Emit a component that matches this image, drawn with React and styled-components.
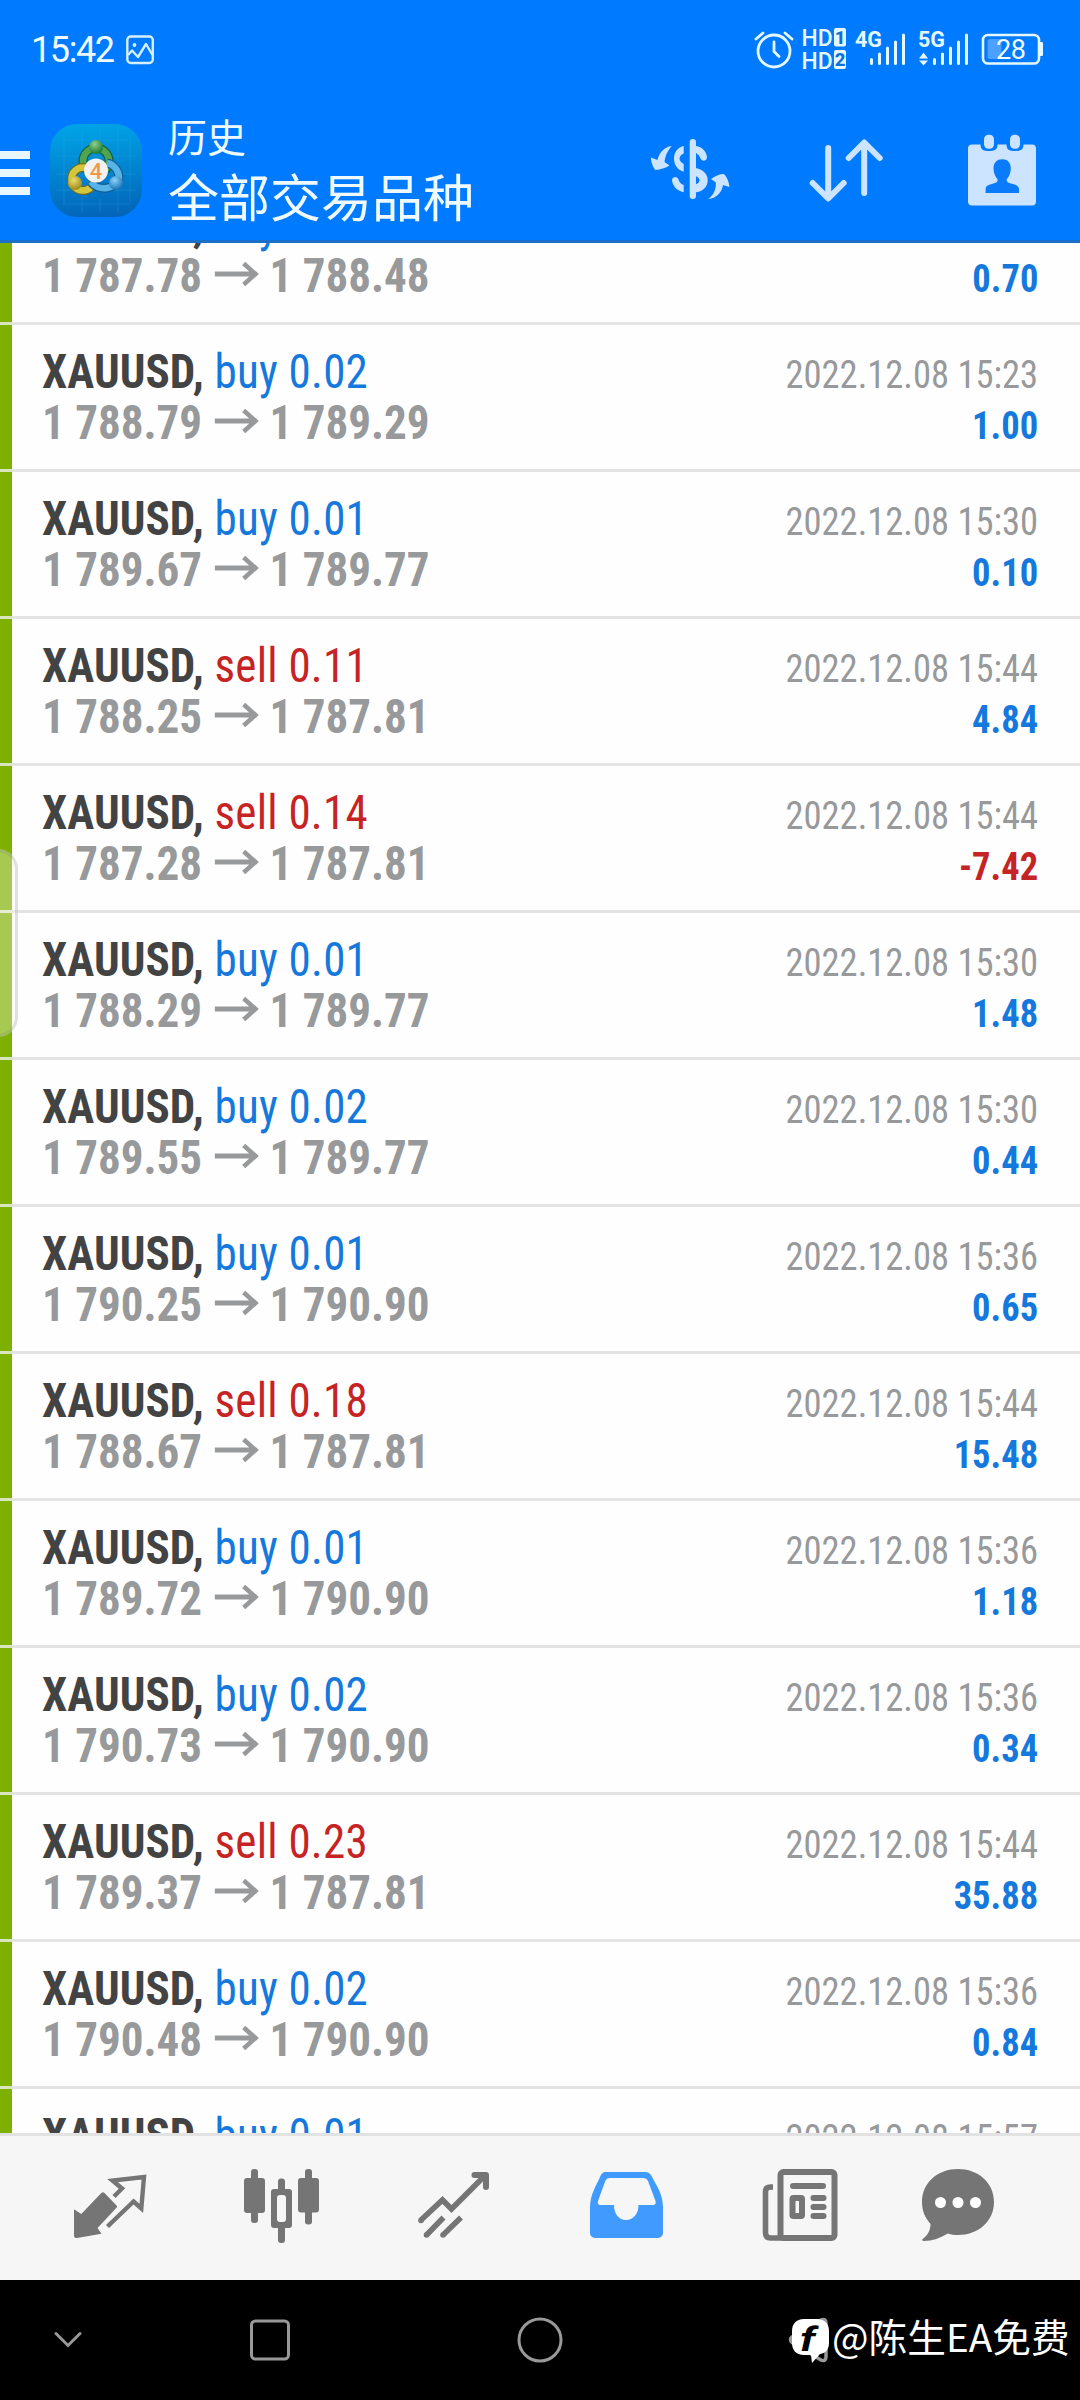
import React from 'react';
import styled, { createGlobalStyle } from 'styled-components';

const GlobalStyle = createGlobalStyle`
  * {
    box-sizing: border-box;
  }
  body {
    margin: 0;
    background: #000;
  }
  svg {
    display: block;
    flex: none;
  }
`;

const SIDE_COLORS = { buy: '#1478dd', sell: '#c62424' };

// STYLED COMPONENTS
const Screen = styled.div`
  position: relative;
  display: flex;
  flex-direction: column;
  width: 1080px;
  height: 2400px;
  overflow: hidden;
  background: #fefefe;
  font-family: Roboto, 'Noto Sans CJK SC', sans-serif;
`;

const Header = styled.header`
  display: flex;
  flex-direction: column;
  height: 243px;
  background: #007aff;
  border-bottom: 3px solid #1a70c9;
  color: #eefaff;
`;

const StatusBar = styled.div`
  display: flex;
  justify-content: space-between;
  height: 100px;
  padding: 20px 30px 0 31px;
`;

const StatusGroup = styled.div`
  display: flex;
  align-items: center;
  height: 60px;
`;

const Clock = styled.span`
  width: 95px;
  font-size: 36px;
  line-height: 62px;
  letter-spacing: -1.4px;
`;

const Toolbar = styled.div`
  display: flex;
  height: 140px;
`;

const MenuButton = styled.button`
  display: flex;
  flex-direction: column;
  gap: 10px;
  width: 30px;
  margin: 51px 20px 0 0;
  padding: 0;
  border: 0;
  background: none;
`;

const MenuBar = styled.span`
  height: 8px;
  background: #e8f6ff;
`;

const AppLogo = styled.svg`
  margin-top: 24px;
`;

const Titles = styled.div`
  display: flex;
  flex-direction: column;
  width: 476px;
  margin: 11px 0 0 26px;
`;

const Subtitle = styled.span`
  font-size: 39px;
  line-height: 56px;
`;

const Title = styled.span`
  font-size: 51px;
  line-height: 66px;
`;

const Actions = styled.div`
  display: grid;
  grid-template-columns: 90px 90px 90px;
  column-gap: 66px;
  margin-top: 25px;
`;

const List = styled.main`
  position: relative;
  height: 1890px;
  overflow: hidden;
`;

const Deals = styled.div`
  margin-top: -65px;
`;

const Row = styled.div`
  display: flex;
  height: 147px;
`;

const Marker = styled.div`
  width: 12px;
  background: #7eb000;
  border-bottom: 3px solid #d9e6bd;
`;

const RowBody = styled.div`
  display: flex;
  flex: 1;
  justify-content: space-between;
  padding: 0 42px 0 30px;
  border-bottom: 3px solid #e4e4e4;
`;

const Column = styled.div`
  padding-top: ${props => (props.$end ? 24 : 21)}px;
  font-size: ${props => (props.$end ? 39.5 : 48)}px;
  font-stretch: 75%;
  line-height: 51px;
  text-align: ${props => (props.$end ? 'right' : 'left')};
  white-space: nowrap;
  transform: scaleX(${props => (props.$end ? 0.925 : 0.938)});
  transform-origin: ${props => (props.$end ? 'right' : 'left')} top;
`;

const Line = styled.div`
  display: flex;
  height: 51px;
`;

const DealSymbol = styled.span`
  width: 184px;
  color: #434343;
  font-weight: 700;
  letter-spacing: 0.1px;
`;

const Side = styled.span`
  color: ${props => SIDE_COLORS[props.$side]};
  letter-spacing: 0.25px;
`;

const Price = styled.span`
  color: #97999b;
  font-weight: 700;
`;

const PriceArrow = styled.svg`
  margin: 12px 12px 0 13px;
`;

const DealTime = styled.div`
  color: #97999b;
`;

const Profit = styled.div`
  color: ${props => (props.$loss ? '#c62424' : '#1478dd')};
  font-weight: 700;
`;

const EdgeHandle = styled.div`
  position: absolute;
  top: 606px;
  left: -3px;
  width: 21px;
  height: 188px;
  border: 3px solid rgba(190, 195, 190, 0.5);
  border-radius: 0 20px 20px 0;
  background: rgba(255, 255, 255, 0.32);
  background-clip: padding-box;
`;

const TabBar = styled.nav`
  display: grid;
  grid-template-columns: 172px 172px 172px 172px 176px 140px;
  justify-items: center;
  height: 147px;
  padding: 24px 52px 0 24px;
  border-top: 3px solid #e2e2e2;
  background: #f6f6f6;
  color: #757575;
`;

const SystemNav = styled.div`
  display: grid;
  grid-template-columns: 136px 268px 272px 266px;
  place-items: center;
  height: 120px;
  background: #000;
`;

const Watermark = styled.div`
  position: absolute;
  top: 2309px;
  left: 791px;
  display: flex;
  color: #fff;
  font-family: 'Noto Sans CJK SC', sans-serif;
  font-size: 38.700px;
  line-height: 52px;
  white-space: nowrap;
`;

const WatermarkLogo = styled.svg`
  margin: 9px 2px 0 0;
`;

// STATUS BAR
const StatusIcons = () => (
  <svg width="310" height="60" viewBox="0 0 310 60" fill="none" stroke="#e6f8ff">
    <circle cx="34" cy="31" r="16" strokeWidth="2.8" />
    <path d="M34 22v9.5l5 5M16 19l7-6M52 19l-7-6" strokeWidth="2.8" strokeLinecap="round" />
    <g fill="#e6f8ff" stroke="none" fontFamily="Roboto, sans-serif">
      <text x="61.5" y="26" fontSize="23.5" fontWeight="500" textLength="31" lengthAdjust="spacingAndGlyphs">HD</text>
      <text x="61.5" y="48.5" fontSize="23.5" fontWeight="500" textLength="31" lengthAdjust="spacingAndGlyphs">HD</text>
      <rect x="94" y="8" width="12" height="18.5" rx="2" />
      <rect x="94" y="30" width="12" height="19" rx="2" />
      <text x="94.700" y="24" fontSize="18.500" fontWeight="800" fill="#0a6fe0">1</text>
      <text x="94.700" y="46" fontSize="18.500" fontWeight="800" fill="#0a6fe0">2</text>
      <text x="115" y="27" fontSize="21.5" fontWeight="700" textLength="27">4G</text>
      <text x="178" y="27" fontSize="21.5" fontWeight="700" textLength="27">5G</text>
      <path d="M179 38.5l4.5-6 4.5 6zM179 40.5l4.5 5 4.5-5z" />
    </g>
    <path
      d="M131.5 39.5v4M139.500 34v9.500M147.500 28v15.500M155.500 22v21.500M163.500 15v28.500M194.500 39.500v4M202.500 34v9.500M210.500 28v15.500M218.500 22v21.500M226.500 15v28.500"
      strokeWidth="3"
      strokeLinecap="round"
    />
    <rect x="243" y="15" width="56" height="28.5" rx="5" strokeWidth="2.6" />
    <rect x="247.5" y="19" width="14" height="20" rx="2" fill="#4da0ff" stroke="none" />
    <rect x="299" y="22" width="4" height="14" rx="1" fill="#e6f8ff" stroke="none" />
    <text x="256" y="39" fontSize="27" fill="#f2fcff" stroke="none" fontFamily="Roboto, sans-serif" textLength="30">28</text>
  </svg>
);

const PictureIcon = () => (
  <svg width="28" height="30" viewBox="0 0 28 30" fill="none" stroke="#d5efff" strokeWidth="2.4">
    <rect x="1.3" y="1.5" width="25.5" height="26.5" rx="3.5" />
    <circle cx="8.5" cy="10" r="1.9" fill="#d5efff" stroke="none" />
    <path d="M2 20l4-4.5 6 6.5L20 9l6.5 11" strokeLinejoin="round" />
  </svg>
);

const Logo = () => (
  <AppLogo width="92" height="94" viewBox="0 0 92 94">
    <defs>
      <linearGradient id="logoBg" x1="0.5" y1="0" x2="0.6" y2="1">
        <stop offset="0" stopColor="#00a3e6" />
        <stop offset="0.5" stopColor="#0284d0" />
        <stop offset="1" stopColor="#0364b8" />
      </linearGradient>
      <radialGradient id="greenBall" cx="0.4" cy="0.3" r="0.7">
        <stop offset="0" stopColor="#8fd08a" />
        <stop offset="1" stopColor="#1d7a35" />
      </radialGradient>
      <radialGradient id="goldBall" cx="0.4" cy="0.3" r="0.7">
        <stop offset="0" stopColor="#eedd6a" />
        <stop offset="1" stopColor="#9c8a17" />
      </radialGradient>
      <radialGradient id="blueBall" cx="0.4" cy="0.3" r="0.7">
        <stop offset="0" stopColor="#8fd3f7" />
        <stop offset="1" stopColor="#1673b8" />
      </radialGradient>
    </defs>
    <rect width="92" height="93" rx="27" fill="url(#logoBg)" />
    <path
      d="M14 12v68M32 6v82M50 4v18M50 74v14M68 6v82M80 14v64M6 32h80M6 50h80M6 66h80M12 80h68M14 16h64"
      stroke="#2fb2e6"
      strokeOpacity="0.25"
    />
    <g fill="none">
      <circle cx="46" cy="37" r="13" stroke="#185f3c" strokeWidth="9" />
      <circle cx="46" cy="37" r="13" stroke="#4fa550" strokeWidth="6.5" />
      <circle cx="33" cy="55" r="11.5" stroke="#6f6d20" strokeWidth="9" />
      <circle cx="33" cy="55" r="11.5" stroke="#d3c63c" strokeWidth="6.5" />
      <path d="M41 58a15 12 0 0 0 28-4c0-7-5-14-12-15" stroke="#135f96" strokeWidth="9" />
      <path d="M41 58a15 12 0 0 0 28-4c0-7-5-14-12-15" stroke="#58b3e6" strokeWidth="6.5" />
    </g>
    <circle cx="46" cy="23" r="7" fill="url(#greenBall)" />
    <circle cx="25" cy="59" r="7" fill="url(#goldBall)" />
    <circle cx="66" cy="59" r="7" fill="url(#blueBall)" />
    <circle cx="46" cy="46.5" r="12" fill="#f4f2f0" />
    <text x="46" y="54.5" fontSize="22" fontWeight="500" fill="#f09a48" textAnchor="middle" fontFamily="Roboto, sans-serif">4</text>
  </AppLogo>
);

// HEADER ACTIONS
const CurrencyIcon = () => (
  <svg width="90" height="85" viewBox="0 0 90 85" fill="#cce4ff">
    <path d="M27.7 21C20 22 15 28 13.500 35L7 32.500c0 5 2 10 4.500 12.500 5-.5 10-2 14-4.500L20.500 37c1-7 3-11 7.200-16z" />
    <path d="M64.300 74c5-4 8-9 7.500-16.500L67 54c4-3 8-5 13-5 3 3 5 8 5.500 13L79 60c-1 7-6 13-14.700 14z" />
    <path d="M39.700 21C33 22.500 30 28 30 33.500S33 45 39.700 46.700V39c-5.500-3-5.500-8 0-10.500z" />
    <path d="M28 54.500c1-3.500 5.500-3.500 6.500 0 .8 3 2.700 4.500 5.200 5.500v7.300C33 66 28 60.500 28 54.500z" />
    <rect x="45.700" y="14" width="6.300" height="60" rx="3" />
    <path d="M51 21c7 .5 11 5 12 11 .2 4-5 5-6.500 1.500-1-3-3-5-5.500-6z" />
    <path d="M51 43c8 1 12.700 6 12.700 12.200S59 66.800 51 67.500v-8c6-1.500 6-7 0-8.500z" />
  </svg>
);

const SortIcon = () => (
  <svg width="90" height="85" viewBox="0 0 90 85" fill="none" stroke="#cce4ff" strokeWidth="6" strokeLinecap="round" strokeLinejoin="round">
    <path d="M28.200 23v50M12.700 58l15.500 15.500L43.700 58M64.200 68V18M48.700 33l15.500-15.500L79.700 33" />
  </svg>
);

const CalendarIcon = () => (
  <svg width="90" height="85" viewBox="0 0 90 85" fill="#cce4ff">
    <path d="M16 19.500h8.500c0 6 4 6.500 8.500 6.500s8.500-.5 8.500-6.500h9c0 6 4 6.500 8.500 6.500s8.500-.5 8.500-6.500H76a4 4 0 0 1 4 4v53a4 4 0 0 1-4 4H16a4 4 0 0 1-4-4v-53a4 4 0 0 1 4-4z" />
    <rect x="28" y="9.800" width="10" height="14" rx="4.500" />
    <rect x="54" y="9.800" width="10" height="14" rx="4.500" />
    <path
      d="M46.200 34.300c6 0 9 4 8.500 10 0 4-2 8-4 10 0 3.500 2 3.500 5 4.500 4 1 7 2 7.300 5v4.200H29.600v-4.200c.5-3 3-4 7-5 3-1 5-1 5-4.500-2-2-4-6-4-10-.5-6 2.600-10 8.600-10z"
      fill="#0a7bfa"
    />
  </svg>
);

const Arrow = () => (
  <PriceArrow width="47" height="24" viewBox="0 0 47 24" fill="none" stroke="#97999b" strokeWidth="4.800">
    <path d="M0 12h44M31 1.500L43.500 12 31 22.500" />
  </PriceArrow>
);

// TAB BAR
const TradeIcon = () => (
  <svg width="96" height="96" viewBox="0 0 96 96">
    <path d="M52 36.500l8-8-9.500-8L82 17l-2.700 31.500-7.700-7L45.500 66.500" fill="none" stroke="currentColor" strokeWidth="4.400" />
    <path d="M42.500 33l12 12.500c.7.7.7 1.500 0 2.200L35.500 68l4 5.700L15 78c-2 .2-3-.6-3-2.500V49.300l7.300 4.700 20-21c1.200-1 2.200-1 3.200 0z" fill="currentColor" />
  </svg>
);

const CandlesIcon = () => (
  <svg width="96" height="96" viewBox="0 0 96 96" fill="currentColor">
    <rect x="17" y="9" width="7" height="54" rx="3" />
    <rect x="10" y="18" width="21" height="35" rx="3" />
    <rect x="71" y="9" width="7" height="55.5" rx="3" />
    <rect x="64" y="18" width="21" height="34.5" rx="3" />
    <rect x="44" y="18.5" width="7" height="64.5" rx="3" />
    <rect x="37" y="29" width="21" height="39" rx="3" />
    <rect x="43" y="35" width="9" height="27" rx="3" fill="#f6f6f6" />
  </svg>
);

const ChartIcon = () => (
  <svg width="96" height="96" viewBox="0 0 96 96" fill="none" stroke="currentColor" strokeWidth="5.600">
    <path d="M14.500 60.500l22-20.500 9 9L79 15.500" />
    <path d="M68.500 15h11.500v12" strokeWidth="6" strokeLinecap="round" strokeLinejoin="round" />
    <path d="M20.500 75l17-17.500M37 75l18-17.500" />
    <g fill="currentColor" stroke="none">
      <circle cx="15" cy="60.500" r="2.800" />
      <circle cx="20.500" cy="75" r="2.800" />
      <circle cx="37" cy="75" r="2.800" />
    </g>
  </svg>
);

const InboxIcon = () => (
  <svg width="96" height="96" viewBox="0 0 96 96">
    <path
      fillRule="evenodd"
      d="M28 12h39c3.500 0 5 1.500 6.500 4C79 26 85 35 85 47v26a5 5 0 0 1-5 5H17a5 5 0 0 1-5-5V47c0-12 6-21 10-30 1.300-3 2.500-5 6-5zM32 18c-2.500 0-3.700 1-4.700 3L20 41c-.7 2.300 0 4 2.500 4H36c0 8 4 15 12 15s12.500-7 12.500-15H75c2.500 0 3.200-1.700 2.500-4l-7.500-20c-1-2-2.500-3-5-3z"
      fill="#419bff"
    />
  </svg>
);

const NewsIcon = () => (
  <svg width="96" height="96" viewBox="0 0 96 96" fill="none" stroke="currentColor" strokeWidth="6">
    <rect x="28.500" y="12" width="54" height="66" rx="3" />
    <path d="M21 27h-2.500c-3.500 0-5 1.500-5 4.500v41c0 3.500 1.500 5.500 5 5.500h12" strokeWidth="5.600" />
    <path d="M41 26h30M61.500 38h10M61.500 47h10M61.500 56h10" strokeLinecap="round" />
    <rect x="40.500" y="38" width="9.500" height="18" rx="1" />
  </svg>
);

const ChatIcon = () => (
  <svg width="96" height="96" viewBox="0 0 96 96">
    <path d="M48 9c20 0 36 13.500 36 33S68 75 48 75c-4 0-7-.5-10-1.500C30 78 23 81 14 81c-2 0-2.500-1.300-1-2.300C18 75 20.500 70 20.500 64 15 57.500 12 51 12 42 12 22.500 28 9 48 9z" fill="currentColor" />
    <g fill="#fff">
      <circle cx="30.500" cy="42.500" r="5.500" />
      <circle cx="48" cy="42.500" r="5.500" />
      <circle cx="65.500" cy="42.500" r="5.500" />
    </g>
  </svg>
);

// SYSTEM NAVIGATION
const HideIcon = () => (
  <svg width="30" height="20" viewBox="0 0 30 20" fill="none" stroke="#999" strokeWidth="3" strokeLinecap="round">
    <path d="M3 3.500l12 12 12-12" />
  </svg>
);

const RecentsIcon = () => (
  <svg width="42" height="42" viewBox="0 0 42 42" fill="none" stroke="#999" strokeWidth="3">
    <rect x="2.500" y="2" width="37" height="38" rx="4" />
  </svg>
);

const HomeIcon = () => (
  <svg width="48" height="48" viewBox="0 0 48 48" fill="none" stroke="#999" strokeWidth="3">
    <circle cx="24" cy="24" r="21" />
  </svg>
);

const BackIcon = () => (
  <svg width="42" height="48" viewBox="0 0 42 48" fill="none" stroke="#999" strokeWidth="3.500" strokeLinejoin="round">
    <path d="M33 4L4 21c-2 1.500-2 4 0 5.500L33 44c3 1.500 5 0 5-3V7c0-3-2-4.500-5-3z" />
  </svg>
);

const deals = [
  { side: 'buy', volume: '0.01', open: '1 787.78', close: '1 788.48', profit: '0.70' },
  { side: 'buy', volume: '0.02', open: '1 788.79', close: '1 789.29', time: '2022.12.08 15:23', profit: '1.00' },
  { side: 'buy', volume: '0.01', open: '1 789.67', close: '1 789.77', time: '2022.12.08 15:30', profit: '0.10' },
  { side: 'sell', volume: '0.11', open: '1 788.25', close: '1 787.81', time: '2022.12.08 15:44', profit: '4.84' },
  { side: 'sell', volume: '0.14', open: '1 787.28', close: '1 787.81', time: '2022.12.08 15:44', profit: '-7.42' },
  { side: 'buy', volume: '0.01', open: '1 788.29', close: '1 789.77', time: '2022.12.08 15:30', profit: '1.48' },
  { side: 'buy', volume: '0.02', open: '1 789.55', close: '1 789.77', time: '2022.12.08 15:30', profit: '0.44' },
  { side: 'buy', volume: '0.01', open: '1 790.25', close: '1 790.90', time: '2022.12.08 15:36', profit: '0.65' },
  { side: 'sell', volume: '0.18', open: '1 788.67', close: '1 787.81', time: '2022.12.08 15:44', profit: '15.48' },
  { side: 'buy', volume: '0.01', open: '1 789.72', close: '1 790.90', time: '2022.12.08 15:36', profit: '1.18' },
  { side: 'buy', volume: '0.02', open: '1 790.73', close: '1 790.90', time: '2022.12.08 15:36', profit: '0.34' },
  { side: 'sell', volume: '0.23', open: '1 789.37', close: '1 787.81', time: '2022.12.08 15:44', profit: '35.88' },
  { side: 'buy', volume: '0.02', open: '1 790.48', close: '1 790.90', time: '2022.12.08 15:36', profit: '0.84' },
  { side: 'buy', volume: '0.01', time: '2022.12.08 15:57' },
];

const Deal = ({ deal }) => (
  <Row>
    <Marker />
    <RowBody>
      <Column>
        <Line>
          <DealSymbol>XAUUSD,</DealSymbol>
          <Side $side={deal.side}>{deal.side} {deal.volume}</Side>
        </Line>
        {deal.open && (
          <Line>
            <Price>{deal.open}</Price>
            <Arrow />
            <Price>{deal.close}</Price>
          </Line>
        )}
      </Column>
      <Column $end>
        <DealTime>{deal.time || '\u00a0'}</DealTime>
        {deal.profit && <Profit $loss={deal.profit.startsWith('-')}>{deal.profit}</Profit>}
      </Column>
    </RowBody>
  </Row>
);

const App = () => (
  <>
    <GlobalStyle />
    <Screen>
      <Header>
        <StatusBar>
          <StatusGroup>
            <Clock>15:42</Clock>
            <PictureIcon />
          </StatusGroup>
          <StatusIcons />
        </StatusBar>
        <Toolbar>
          <MenuButton aria-label="menu">
            <MenuBar />
            <MenuBar />
            <MenuBar />
          </MenuButton>
          <Logo />
          <Titles>
            <Subtitle>历史</Subtitle>
            <Title>全部交易品种</Title>
          </Titles>
          <Actions>
            <CurrencyIcon />
            <SortIcon />
            <CalendarIcon />
          </Actions>
        </Toolbar>
      </Header>
      <List>
        <Deals>
          {deals.map((deal, i) => <Deal key={i} deal={deal} />)}
        </Deals>
        <EdgeHandle />
      </List>
      <TabBar>
        <TradeIcon />
        <CandlesIcon />
        <ChartIcon />
        <InboxIcon />
        <NewsIcon />
        <ChatIcon />
      </TabBar>
      <SystemNav>
        <HideIcon />
        <RecentsIcon />
        <HomeIcon />
        <BackIcon />
      </SystemNav>
      <Watermark>
        <WatermarkLogo width="39" height="46" viewBox="0 0 39 46">
          <path d="M13 1h13c8 0 12 5 12 12v12c0 6-3 10-9 11l-8 9-1-8h-7C5 37 1 32 1 25V13C1 6 5 1 13 1z" fill="#fff" />
          <text transform="translate(9 33) scale(1.3 1)" fontSize="34" fontWeight="700" fontStyle="italic" fontFamily="Roboto, sans-serif">f</text>
        </WatermarkLogo>
        @陈生EA免费
      </Watermark>
    </Screen>
  </>
);

export default App;
